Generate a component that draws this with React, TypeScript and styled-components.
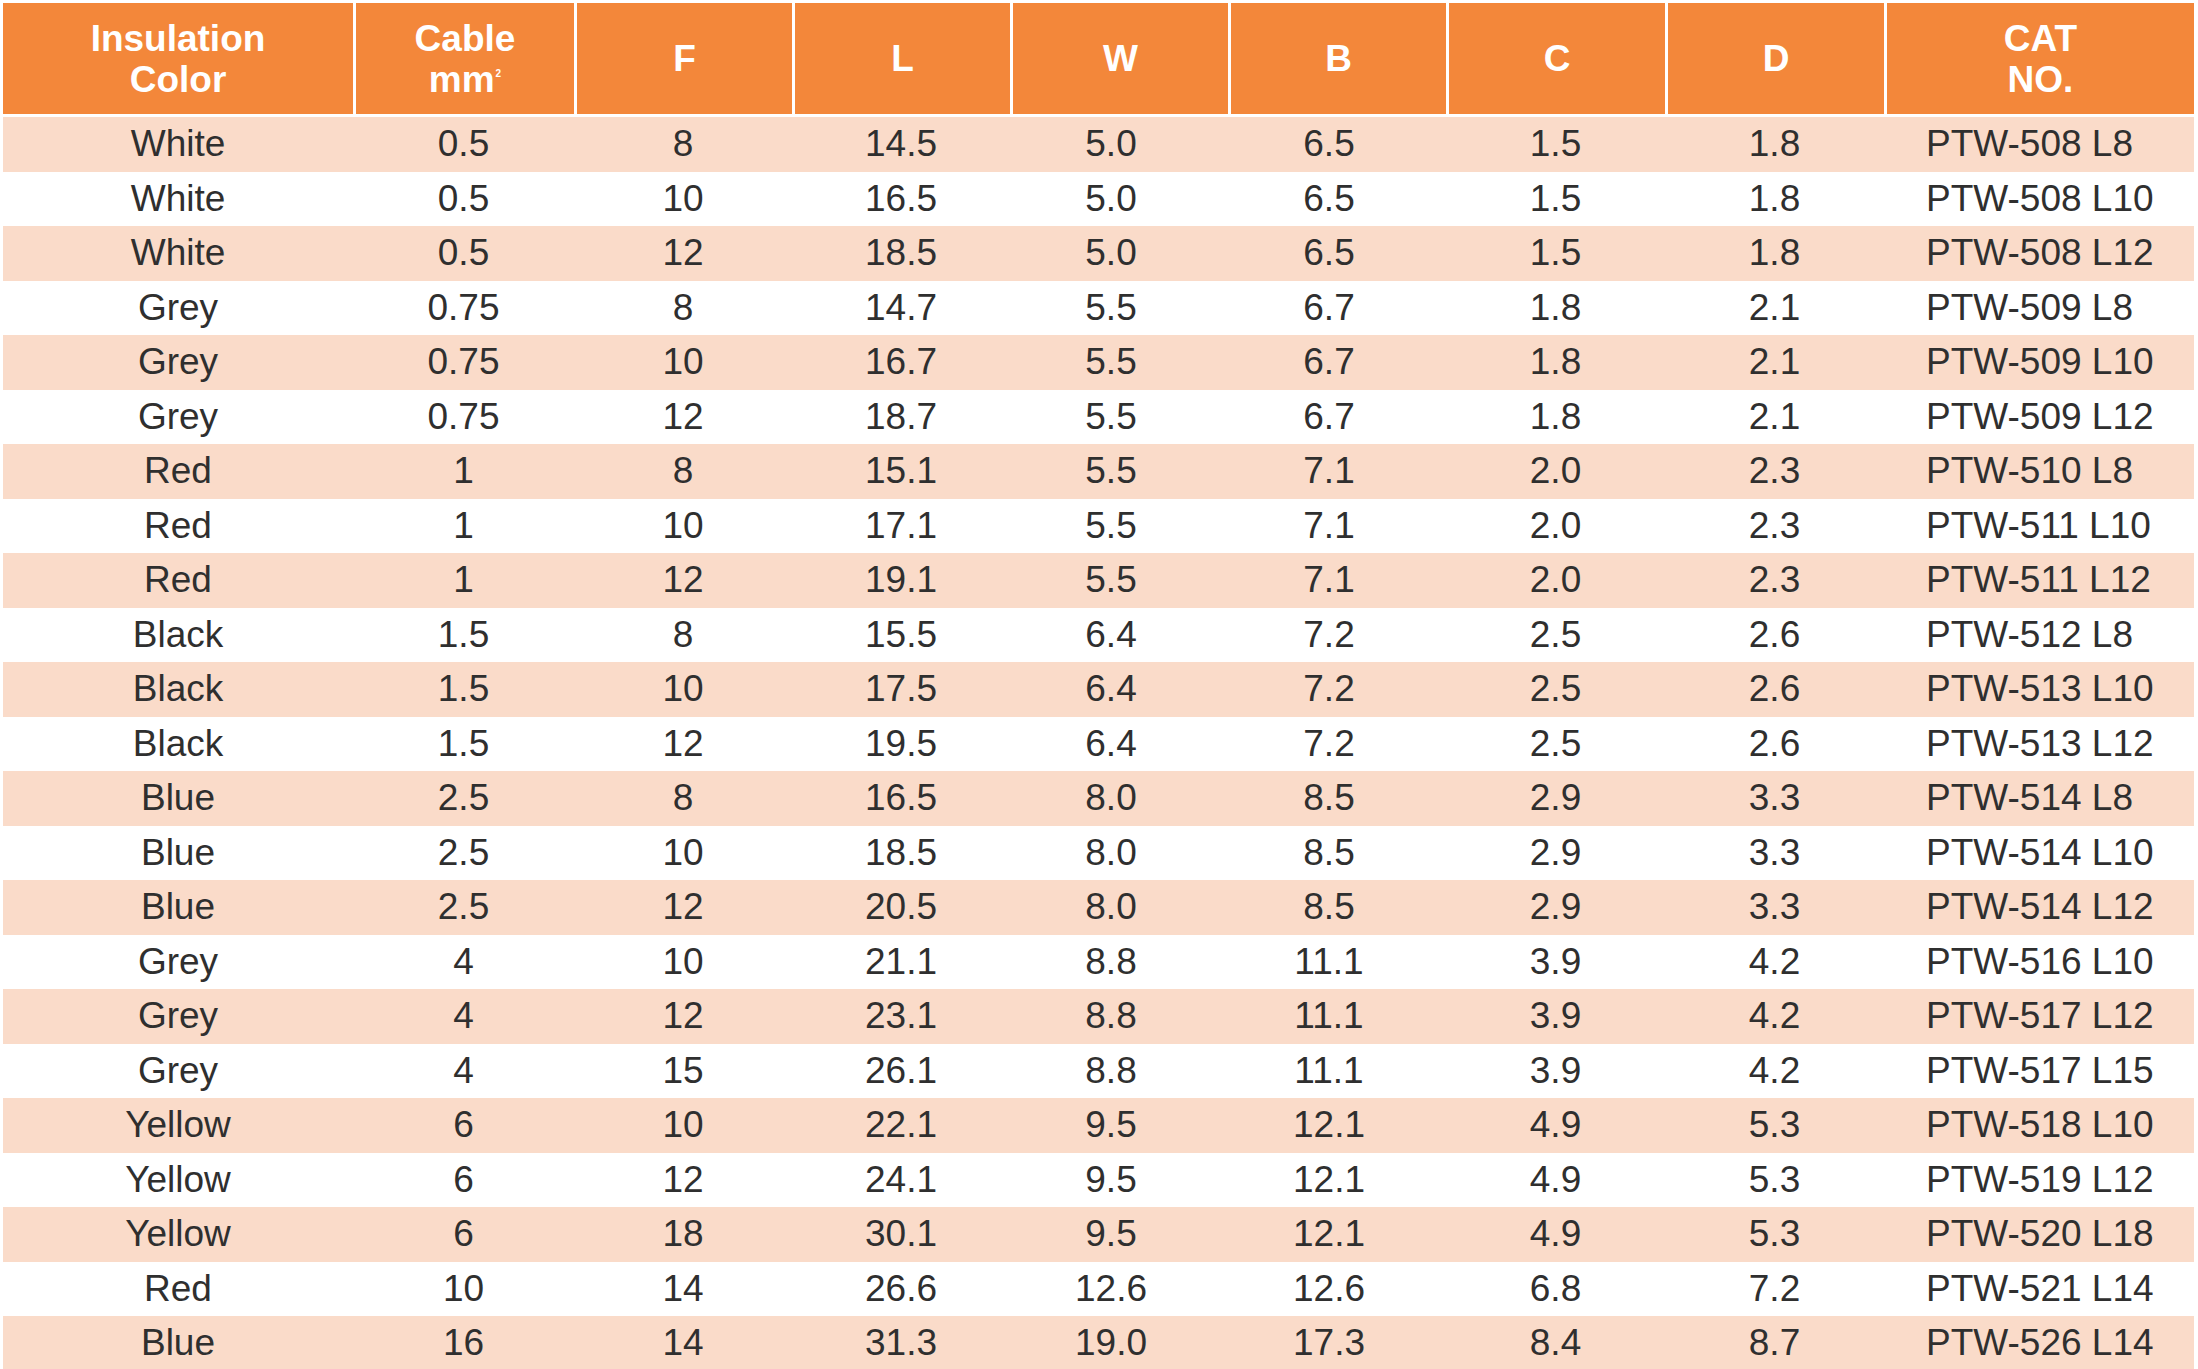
import styled, { createGlobalStyle } from "styled-components";

const GlobalStyle = createGlobalStyle`
  html, body {
    margin: 0;
    padding: 0;
    background: #ffffff;
  }
  body {
    font-family: "Liberation Sans", Arial, sans-serif;
  }
`;

const COLUMNS = "350px 221px 218px 218px 218px 218px 219px 219px 310px";

const Page = styled.div`
  padding: 3px 4px 0 3px;
`;

const Table = styled.div`
  width: 2191px;
  display: flex;
  flex-direction: column;
`;

const HeaderRow = styled.div`
  display: grid;
  grid-template-columns: ${COLUMNS};
  height: 111px;
  margin-bottom: 3px;
`;

const HeadCell = styled.div<{ $first?: boolean }>`
  box-sizing: border-box;
  display: flex;
  align-items: center;
  justify-content: center;
  background: #f3873a;
  border-left: ${(p) => (p.$first ? "none" : "3px solid #ffffff")};
`;

const HeadLabel = styled.span`
  display: block;
  text-align: center;
  color: #ffffff;
  font-weight: 700;
  font-size: 37px;
  line-height: 41px;
`;

const Sup = styled.span`
  font-size: 10px;
  line-height: 0;
  vertical-align: 15px;
  margin-left: 1px;
`;

const BodyRow = styled.div<{ $shaded: boolean }>`
  display: grid;
  grid-template-columns: ${COLUMNS};
  height: 54.5px;
  background: ${(p) => (p.$shaded ? "#fadbc9" : "#ffffff")};
`;

type Align = "center" | "left" | "shifted";

const Cell = styled.div<{ $align: Align }>`
  display: flex;
  align-items: center;
  justify-content: ${(p) => (p.$align === "left" ? "flex-start" : "center")};
  padding-left: ${(p) => (p.$align === "left" ? "42px" : "0")};
  padding-right: ${(p) => (p.$align === "shifted" ? "16px" : "0")};
  color: #2f2f2f;
  font-size: 37px;
  white-space: nowrap;
`;

type Row = [string, string, string, string, string, string, string, string, string];

const rows: Row[] = [
  ["White", "0.5", "8", "14.5", "5.0", "6.5", "1.5", "1.8", "PTW-508 L8"],
  ["White", "0.5", "10", "16.5", "5.0", "6.5", "1.5", "1.8", "PTW-508 L10"],
  ["White", "0.5", "12", "18.5", "5.0", "6.5", "1.5", "1.8", "PTW-508 L12"],
  ["Grey", "0.75", "8", "14.7", "5.5", "6.7", "1.8", "2.1", "PTW-509 L8"],
  ["Grey", "0.75", "10", "16.7", "5.5", "6.7", "1.8", "2.1", "PTW-509 L10"],
  ["Grey", "0.75", "12", "18.7", "5.5", "6.7", "1.8", "2.1", "PTW-509 L12"],
  ["Red", "1", "8", "15.1", "5.5", "7.1", "2.0", "2.3", "PTW-510 L8"],
  ["Red", "1", "10", "17.1", "5.5", "7.1", "2.0", "2.3", "PTW-511 L10"],
  ["Red", "1", "12", "19.1", "5.5", "7.1", "2.0", "2.3", "PTW-511 L12"],
  ["Black", "1.5", "8", "15.5", "6.4", "7.2", "2.5", "2.6", "PTW-512 L8"],
  ["Black", "1.5", "10", "17.5", "6.4", "7.2", "2.5", "2.6", "PTW-513 L10"],
  ["Black", "1.5", "12", "19.5", "6.4", "7.2", "2.5", "2.6", "PTW-513 L12"],
  ["Blue", "2.5", "8", "16.5", "8.0", "8.5", "2.9", "3.3", "PTW-514 L8"],
  ["Blue", "2.5", "10", "18.5", "8.0", "8.5", "2.9", "3.3", "PTW-514 L10"],
  ["Blue", "2.5", "12", "20.5", "8.0", "8.5", "2.9", "3.3", "PTW-514 L12"],
  ["Grey", "4", "10", "21.1", "8.8", "11.1", "3.9", "4.2", "PTW-516 L10"],
  ["Grey", "4", "12", "23.1", "8.8", "11.1", "3.9", "4.2", "PTW-517 L12"],
  ["Grey", "4", "15", "26.1", "8.8", "11.1", "3.9", "4.2", "PTW-517 L15"],
  ["Yellow", "6", "10", "22.1", "9.5", "12.1", "4.9", "5.3", "PTW-518 L10"],
  ["Yellow", "6", "12", "24.1", "9.5", "12.1", "4.9", "5.3", "PTW-519 L12"],
  ["Yellow", "6", "18", "30.1", "9.5", "12.1", "4.9", "5.3", "PTW-520 L18"],
  ["Red", "10", "14", "26.6", "12.6", "12.6", "6.8", "7.2", "PTW-521 L14"],
  ["Blue", "16", "14", "31.3", "19.0", "17.3", "8.4", "8.7", "PTW-526 L14"],
];

// the W and B values sit a little left of their column centre
const alignFor = (col: number): Align => {
  if (col === 8) return "left";
  if (col === 4 || col === 5) return "shifted";
  return "center";
};

export default function App() {
  return (
    <Page>
      <GlobalStyle />
      <Table>
        <HeaderRow>
          <HeadCell $first>
            <HeadLabel>
              Insulation
              <br />
              Color
            </HeadLabel>
          </HeadCell>
          <HeadCell>
            <HeadLabel>
              Cable
              <br />
              mm<Sup>2</Sup>
            </HeadLabel>
          </HeadCell>
          {["F", "L", "W", "B", "C", "D"].map((h) => (
            <HeadCell key={h}>
              <HeadLabel>{h}</HeadLabel>
            </HeadCell>
          ))}
          <HeadCell>
            <HeadLabel>
              CAT
              <br />
              NO.
            </HeadLabel>
          </HeadCell>
        </HeaderRow>
        {rows.map((row, i) => (
          <BodyRow key={row[8] + i} $shaded={i % 2 === 0}>
            {row.map((value, j) => (
              <Cell key={j} $align={alignFor(j)}>
                {value}
              </Cell>
            ))}
          </BodyRow>
        ))}
      </Table>
    </Page>
  );
}
